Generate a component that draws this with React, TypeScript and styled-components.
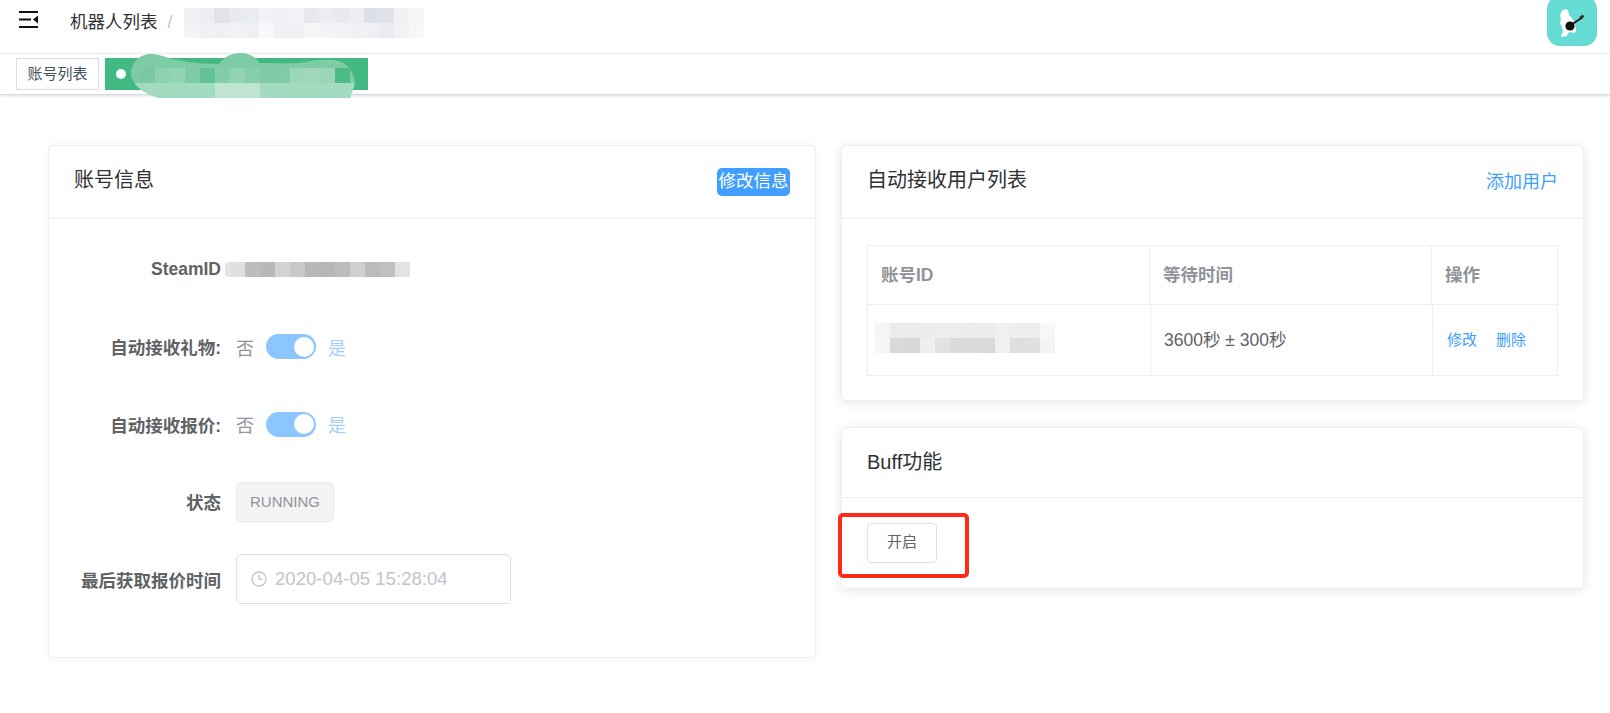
import styled, { createGlobalStyle } from 'styled-components';

const GlobalStyle = createGlobalStyle`
	html,
	body {
		background: #fff;
		margin: 0;
		padding: 0;
	}

	body {
		color: #606266;
		font-family: 'Liberation Sans', 'Noto Sans CJK SC', sans-serif;
		font-size: 17.5px;
		height: 713px;
		overflow: hidden;
	}
`;

const Navbar = styled.header`
	align-items: flex-start;
	border-bottom: 1px solid #f0f1f4;
	box-sizing: border-box;
	display: flex;
	height: 54px;
	overflow: hidden;
	padding: 0 13px 0 19px;
`;

const Hamburger = styled.svg`
	display: block;
	flex: none;
	margin-top: 11px;
`;

const Crumbs = styled.nav`
	align-items: flex-start;
	display: flex;
	flex: 1;
	margin-left: 32px;
`;

const CrumbText = styled.span`
	color: #303133;
	line-height: 24px;
	margin-top: 10px;
`;

const CrumbSep = styled.span`
	color: #c0c4cc;
	line-height: 24px;
	margin: 10px 10px 0 10px;
`;

const CrumbBlur = styled.div`
	margin-left: 2px;
	margin-top: 8px;
`;

const Avatar = styled.div`
	background: #66dcd5;
	border-radius: 13px;
	flex: none;
	height: 50px;
	margin-top: -4px;
	width: 50px;
`;

const TagsBar = styled.div`
	align-items: flex-start;
	border-bottom: 1px solid #d8dce5;
	box-shadow: 0 1px 3px rgba(0, 0, 0, 0.12), 0 0 3px rgba(0, 0, 0, 0.04);
	box-sizing: border-box;
	display: flex;
	gap: 6px;
	height: 41px;
	padding: 4px 0 0 16px;
`;

const Tag = styled.span`
	background: #fff;
	border: 1px solid #d8dce5;
	box-sizing: border-box;
	color: #495060;
	font-size: 15px;
	height: 32px;
	line-height: 30px;
	text-align: center;
	white-space: nowrap;
	width: 83px;
`;

const ActiveTag = styled.span`
	background: #42b983;
	display: block;
	height: 32px;
	position: relative;
	width: 263px;
`;

const Dot = styled.i`
	background: #fff;
	border-radius: 50%;
	display: block;
	height: 10px;
	left: 11px;
	position: absolute;
	top: 11px;
	width: 10px;
`;

const Scribble = styled.svg`
	left: 0;
	position: absolute;
	top: -5px;
`;

const Main = styled.main`
	align-items: start;
	display: grid;
	gap: 25px;
	grid-template-columns: 768px 743px;
	padding: 50px 0 0 48px;
`;

const Column = styled.div`
	display: flex;
	flex-direction: column;
	gap: 26px;
`;

const Card = styled.section<{ $soft?: boolean }>`
	background: #fff;
	border: 1px solid #ebeef5;
	border-radius: 5px;
	box-shadow: ${(p) => (p.$soft ? '0 0 10px rgba(0, 0, 0, 0.04)' : '0 2px 12px 0 rgba(0, 0, 0, 0.1)')};
	box-sizing: border-box;
`;

const CardHeader = styled.div`
	align-items: flex-start;
	border-bottom: 1px solid #ebeef5;
	display: flex;
	justify-content: space-between;
	padding: 22px 25px 22px;
`;

const CardTitle = styled.h2`
	color: #303133;
	font-size: 20px;
	font-weight: 400;
	line-height: 25px;
	margin: 0;
`;

const HeaderLink = styled.a<{ $selected?: boolean }>`
	background: ${(p) => (p.$selected ? '#409eff' : 'transparent')};
	border-radius: 5px;
	box-sizing: border-box;
	color: ${(p) => (p.$selected ? '#fff' : '#409eff')};
	display: block;
	font-size: ${(p) => (p.$selected ? '17.5px' : '18px')};
	height: 28px;
	line-height: 27px;
	padding: ${(p) => (p.$selected ? '0 1.5px' : '1px 0 0')};
`;

const CardBody = styled.div<{ $tableTop?: boolean }>`
	padding: ${(p) => (p.$tableTop ? '26px 25px 24px' : '25px')};
	position: relative;
`;

const FormRow = styled.div`
	align-items: center;
	display: flex;
	height: 50px;
	margin-bottom: 27.5px;
`;

const Label = styled.label`
	box-sizing: border-box;
	color: #606266;
	flex: none;
	font-weight: 700;
	padding-right: 15px;
	text-align: right;
	width: 162px;
`;

const SteamBlur = styled.div`
	background: #e5e5e7;
	border-radius: 3px 0 0 3px;
	margin-left: -11px;
	padding-left: 5px;
`;

const OffText = styled.span`
	color: #909399;
	font-size: 18px;
`;

const OnText = styled.span`
	color: #a0cfff;
	font-size: 18px;
`;

const SwitchGroup = styled.div`
	align-items: center;
	display: flex;
	gap: 12px;
`;

const Track = styled.span`
	background: #8cc5ff;
	border-radius: 13px;
	display: block;
	height: 25px;
	position: relative;
	width: 50px;
`;

const Knob = styled.i`
	background: #fff;
	border-radius: 50%;
	display: block;
	height: 20px;
	position: absolute;
	right: 2px;
	top: 2.5px;
	width: 20px;
`;

const StatusTag = styled.span`
	background: #f4f4f5;
	border: 1px solid #e9e9eb;
	border-radius: 5px;
	box-sizing: border-box;
	color: #909399;
	font-size: 15px;
	height: 40px;
	line-height: 38px;
	text-align: center;
	width: 98px;
`;

const DateBox = styled.div`
	align-items: center;
	border: 1px solid #dcdfe6;
	border-radius: 5px;
	box-sizing: border-box;
	color: #c0c4cc;
	display: flex;
	font-size: 18.6px;
	gap: 8px;
	height: 50px;
	padding-left: 14px;
	width: 275px;
`;

const UserTable = styled.div`
	border-left: 1px solid #ebeef5;
	border-top: 1px solid #ebeef5;
`;

const TableRow = styled.div<{ $head?: boolean }>`
	border-bottom: 1px solid #ebeef5;
	display: grid;
	grid-template-columns: ${(p) => (p.$head ? '282px 282px 1fr' : '283px 282px 1fr')};
	height: ${(p) => (p.$head ? '58px' : '70px')};
`;

const Cell = styled.div<{ $head?: boolean }>`
	align-items: center;
	border-right: 1px solid #ebeef5;
	box-sizing: border-box;
	color: ${(p) => (p.$head ? '#909399' : '#606266')};
	display: flex;
	font-weight: ${(p) => (p.$head ? 700 : 400)};
	padding: 0 0 4px 13px;
`;

const IdCell = styled(Cell)`
	padding: 0 0 5px 7px;
`;

const ActionCell = styled(Cell)`
	gap: 19px;
	padding-left: 14px;
`;

const TextLink = styled.a`
	color: #409eff;
	font-size: 15px;
`;

const GhostButton = styled.button`
	background: #fff;
	border: 1px solid #dcdfe6;
	border-radius: 4px;
	color: #606266;
	display: block;
	font-family: inherit;
	font-size: 15px;
	height: 40px;
	padding: 0 0 6px;
	width: 70px;
`;

const Highlight = styled.div`
	border: 4px solid #ff2a1a;
	border-radius: 5px;
	box-sizing: border-box;
	height: 65px;
	left: -4px;
	position: absolute;
	top: 15px;
	width: 131px;
`;

const Pixels = styled.svg`
	display: block;
	flex: none;
`;

type MosaicProps = {
	rows: string[][];
	size?: number;
};
const Mosaic = ({ rows, size = 15 }: MosaicProps) => {
	const cols = rows[0].length;
	return (
		<Pixels width={cols * size} height={rows.length * size} shapeRendering="crispEdges">
			{rows.map((row, y) =>
				row.map((fill, x) => <rect key={`${x}-${y}`} x={x * size} y={y * size} width={size} height={size} fill={fill} />),
			)}
		</Pixels>
	);
};

const crumbPixels = [
	['#eff0f3', '#eceef2', '#e0e3ea', '#e8eaef', '#e9ecf3', '#f1f2f5', '#eff0f3', '#f2f3f6', '#e6e8ee', '#ecedf1', '#e8eaee', '#eceef1', '#dde0e8', '#dfe2e9', '#eef0f3', '#f4f5f7'],
	['#f3f4f6', '#f0f1f4', '#eef0f4', '#f1f2f6', '#eff0f4', '#f7f8fa', '#f0f1f4', '#f0f1f5', '#f6f6f9', '#f3f4f7', '#f2f3f6', '#f0f1f4', '#eef0f3', '#e9ebf0', '#f1f2f5', '#f6f7f9'],
];

const steamPixels = [
	['#e0e0e2', '#bdbdbd', '#b8b8ba', '#d5d2d2', '#c9c8c6', '#b8b8bb', '#b7b6b6', '#bdbcbc', '#cfcfd1', '#bcbbbb', '#c1c0c0', '#e3e3e5'],
];

const accountPixels = [
	['#f5f5f5', '#ebebeb', '#ebebeb', '#ececec', '#eeeeee', '#ededed', '#ebebeb', '#ececec', '#f0f0f0', '#eeeeee', '#ededed', '#f8f8f9'],
	['#f6f6f6', '#d9d9d9', '#d8d8d8', '#eeeff0', '#e3e2df', '#dbdbdb', '#dbdbdb', '#d9d9d8', '#eff0f1', '#dedfdf', '#dedfdf', '#f3f4f5'],
];

const tagPixels = ['#79c9a2', '#8ed3b1', '#92d4b3', '#7fcba6', '#60c295', '#83cea9', '#90d2b1', '#86cfab', '#7fcba6', '#7fcca6', '#9bd7b8', '#a0d8bb', '#9ad6b6', '#4dbb87'];

const blobPath =
	'M26 22C26 8 36 1 46 1c10 0 18 5 26 6 16 3 30 4 42 4 4-6 11-11 21-11s17 5 19 10c15 0 28 1 41 0 12-3 24-4 34-3 10 1 17 8 19 15l2 8-5 15H55C38 41 28 32 26 22z';

const HamburgerIcon = () => (
	<Hamburger width="19" height="18" viewBox="0 0 19 18">
		<rect x="0" y="0" width="19" height="2" fill="#111" />
		<rect x="0" y="7.5" width="12" height="2" fill="#111" />
		<rect x="0" y="15" width="19" height="2" fill="#111" />
		<path d="M19 4.5v8l-5-4z" fill="#111" />
	</Hamburger>
);

const ClockIcon = () => (
	<svg width="16" height="16" viewBox="0 0 16 16" fill="none" stroke="#c0c4cc" strokeWidth="1.3">
		<circle cx="8" cy="8" r="7" />
		<path d="M8 3.8V8.4h3.6" />
	</svg>
);

const LogoArt = () => (
	<svg width="50" height="50" viewBox="0 0 50 50">
		<path d="M15 15l3-2 3 1 1 5 3 3 3 5 1 8-1 2-5-1-2 1-1 3-5 1-1-2 2-3-1-5-2-4 1-4-1-4z" fill="#fff" />
		<circle cx="23" cy="30" r="4.6" fill="#111" />
		<path d="M24 29l12-8" stroke="#111" strokeWidth="1.6" />
		<path d="M33 22l3.5-2.5" stroke="#333" strokeWidth="2.4" />
	</svg>
);

const ScribbleArt = () => (
	<Scribble width="263" height="45" viewBox="0 0 263 45">
		<defs>
			<clipPath id="blob">
				<path d={blobPath} />
			</clipPath>
		</defs>
		<g clipPath="url(#blob)">
			<rect width="263" height="45" fill="#7fcba5" />
			<rect y="30" width="263" height="15" fill="#a3dbc1" />
			<rect x="110" y="30" width="45" height="15" fill="#bfe4d2" />
			{tagPixels.map((fill, i) => (
				<rect key={i} x={35 + i * 15} y={15} width={15} height={15} fill={fill} shapeRendering="crispEdges" />
			))}
		</g>
	</Scribble>
);

const SwitchRow = ({ label }: { label: string }) => (
	<FormRow>
		<Label>{label}</Label>
		<SwitchGroup>
			<OffText>否</OffText>
			<Track>
				<Knob />
			</Track>
			<OnText>是</OnText>
		</SwitchGroup>
	</FormRow>
);

export default function App() {
	return (
		<>
			<GlobalStyle />
			<Navbar>
				<HamburgerIcon />
				<Crumbs>
					<CrumbText>机器人列表</CrumbText>
					<CrumbSep>/</CrumbSep>
					<CrumbBlur>
						<Mosaic rows={crumbPixels} />
					</CrumbBlur>
				</Crumbs>
				<Avatar>
					<LogoArt />
				</Avatar>
			</Navbar>
			<TagsBar>
				<Tag>账号列表</Tag>
				<ActiveTag>
					<Dot />
					<ScribbleArt />
				</ActiveTag>
			</TagsBar>
			<Main>
				<Card $soft>
					<CardHeader>
						<CardTitle>账号信息</CardTitle>
						<HeaderLink $selected>修改信息</HeaderLink>
					</CardHeader>
					<CardBody>
						<FormRow>
							<Label>SteamID</Label>
							<SteamBlur>
								<Mosaic rows={steamPixels} />
							</SteamBlur>
						</FormRow>
						<SwitchRow label="自动接收礼物:" />
						<SwitchRow label="自动接收报价:" />
						<FormRow>
							<Label>状态</Label>
							<StatusTag>RUNNING</StatusTag>
						</FormRow>
						<FormRow>
							<Label>最后获取报价时间</Label>
							<DateBox>
								<ClockIcon />
								2020-04-05 15:28:04
							</DateBox>
						</FormRow>
					</CardBody>
				</Card>
				<Column>
					<Card>
						<CardHeader>
							<CardTitle>自动接收用户列表</CardTitle>
							<HeaderLink>添加用户</HeaderLink>
						</CardHeader>
						<CardBody $tableTop>
							<UserTable>
								<TableRow $head>
									<Cell $head>账号ID</Cell>
									<Cell $head>等待时间</Cell>
									<Cell $head>操作</Cell>
								</TableRow>
								<TableRow>
									<IdCell>
										<Mosaic rows={accountPixels} />
									</IdCell>
									<Cell>3600秒 ± 300秒</Cell>
									<ActionCell>
										<TextLink>修改</TextLink>
										<TextLink>删除</TextLink>
									</ActionCell>
								</TableRow>
							</UserTable>
						</CardBody>
					</Card>
					<Card>
						<CardHeader>
							<CardTitle>Buff功能</CardTitle>
						</CardHeader>
						<CardBody>
							<GhostButton>开启</GhostButton>
							<Highlight />
						</CardBody>
					</Card>
				</Column>
			</Main>
		</>
	);
}
